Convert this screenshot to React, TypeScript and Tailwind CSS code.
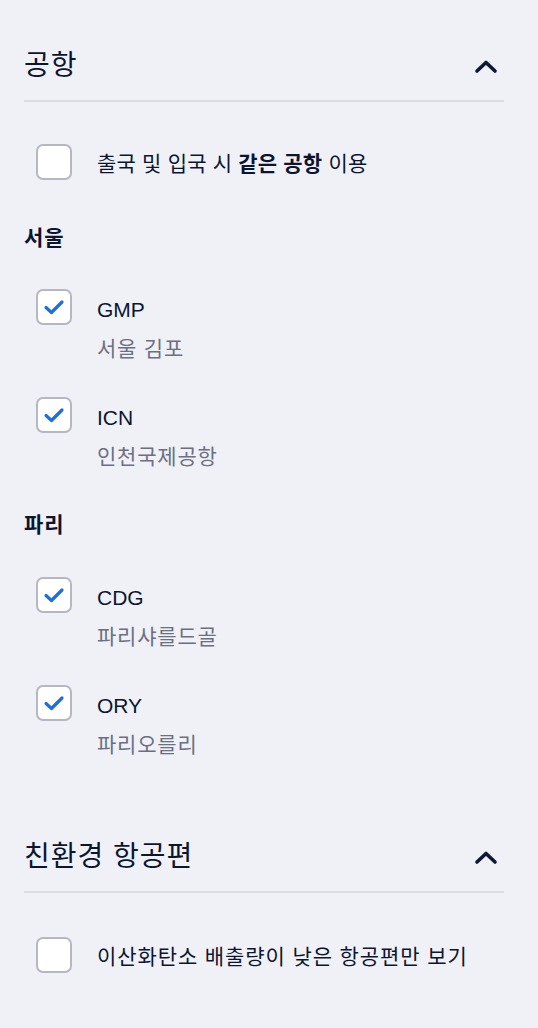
import React from "react";

const FONT = { fontFamily: '"Liberation Sans", "Noto Sans CJK KR", sans-serif' };

function Chevron() {
  return (
    <svg width="24" height="15" viewBox="0 0 24 15" className="mr-[6px]" fill="none">
      <polyline points="3,12 12,3.5 21,12" stroke="#0d1833" strokeWidth="3.6" strokeLinecap="round" strokeLinejoin="round" />
    </svg>
  );
}

function Box({ checked }: { checked?: boolean }) {
  return (
    <div className="w-[36px] h-[36px] shrink-0 rounded-[7px] border-2 border-[#b5b7c3] bg-white flex items-center justify-center">
      {checked && (
        <svg width="22" height="16" viewBox="0 0 22 16" fill="none">
          <polyline points="3,8.5 8.5,13.5 19,3" stroke="#1b6fe0" strokeWidth="3.2" strokeLinecap="round" strokeLinejoin="round" />
        </svg>
      )}
    </div>
  );
}

function Header({ title, mt }: { title: string; mt: string }) {
  return (
    <div className={mt}>
      <div className="flex items-center justify-between h-[40px]">
        <span className="text-[28px] leading-[40px] tracking-[1px] text-[#0b1530]">{title}</span>
        <Chevron />
      </div>
      <div className="mt-[14px] h-[2px] bg-[#dcdde4]" />
    </div>
  );
}

function Item({ code, name }: { code: string; name: string }) {
  return (
    <div className="flex items-start pl-3">
      <Box checked />
      <div className="ml-[25px] flex flex-col">
        <span className="mt-[7px] h-[28px] leading-[28px] text-[21px] text-[#0b1530]">{code}</span>
        <span className="mt-[11px] h-[28px] leading-[28px] text-[21px] tracking-[0.8px] text-[#6b6f84]">{name}</span>
      </div>
    </div>
  );
}

export default function App() {
  return (
    <div style={FONT} className="min-h-screen w-full bg-[#f0f1f7] pl-6 pr-[34px] pb-10">
      <Header title="공항" mt="pt-[46px]" />
      <div className="mt-[42px] flex items-center pl-3">
        <Box />
        <span className="ml-[25px] mt-[4px] text-[21px] leading-[28px] tracking-[0.2px] text-[#0b1530]">
          출국 및 입국 시 <b className="font-bold">같은 공항</b> 이용
        </span>
      </div>

      <div className="mt-[46px] text-[21px] leading-[24px] font-bold tracking-[1px] text-[#0b1530]">서울</div>
      <div className="mt-[39px] flex flex-col gap-[34px]">
        <Item code="GMP" name="서울 김포" />
        <Item code="ICN" name="인천국제공항" />
      </div>

      <div className="mt-[42px] text-[21px] leading-[24px] font-bold tracking-[1px] text-[#0b1530]">파리</div>
      <div className="mt-[40px] flex flex-col gap-[34px]">
        <Item code="CDG" name="파리샤를드골" />
        <Item code="ORY" name="파리오를리" />
      </div>

      <Header title="친환경 항공편" mt="mt-[78px]" />
      <div className="mt-[44px] flex items-center pl-3">
        <Box />
        <span className="ml-[25px] mt-[3px] text-[21px] leading-[28px] tracking-[0.9px] text-[#0b1530]">
          이산화탄소 배출량이 낮은 항공편만 보기
        </span>
      </div>
    </div>
  );
}
